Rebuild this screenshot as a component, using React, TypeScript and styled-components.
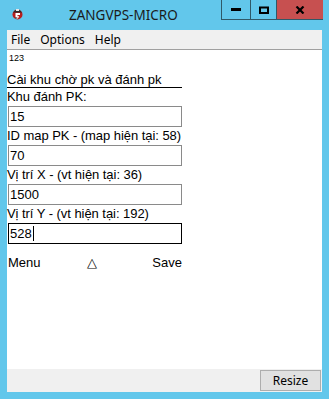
import React from "react";
import styled, { createGlobalStyle } from "styled-components";

const GlobalStyle = createGlobalStyle`
  html, body {
    margin: 0;
    padding: 0;
    background: #ffffff;
  }
`;

const Frame = styled.div`
  width: 329px;
  height: 399px;
  box-sizing: border-box;
  background: #62c7eb;
  display: flex;
  flex-flow: column nowrap;
  padding: 0 7px 7px 7px;
  font-family: "Liberation Sans", Arial, sans-serif;
`;

const TitleBar = styled.div`
  height: 30px;
  flex: 0 0 30px;
  display: flex;
  align-items: flex-start;
  margin: 0 -7px;
`;

const AppIcon = styled.svg`
  margin: 8px 0 0 12px;
  flex: 0 0 auto;
`;

const TitleText = styled.div`
  margin: 6px 0 0 46px;
  font-family: "Noto Sans", "Segoe UI", sans-serif;
  font-size: 13.5px;
  line-height: 18px;
  color: #1b1b1b;
  flex: 1;
`;

const WindowButtons = styled.div`
  display: flex;
  margin-right: 6px;
  height: 20px;
  border-bottom: 1px solid #2f5968;
  border-left: 1px solid #2f5968;
  box-sizing: border-box;
`;

const WinButton = styled.div<{ $w: number; $close?: boolean }>`
  width: ${({ $w }) => $w}px;
  height: 19px;
  display: flex;
  align-items: center;
  justify-content: center;
  background: ${({ $close }) => ($close ? "#c75050" : "transparent")};
  border-right: ${({ $close }) => ($close ? "none" : "1px solid #2f5968")};
`;

const Client = styled.div`
  flex: 1;
  display: flex;
  flex-flow: column nowrap;
  background: #ffffff;
`;

const MenuBar = styled.div`
  height: 19px;
  background: #f0f0f0;
  border-bottom: 1px solid #a0a0a0;
  display: flex;
  align-items: center;
  padding-left: 4px;
  font-family: "Noto Sans", "Segoe UI", sans-serif;
  font-size: 12px;
  color: #000;
`;

const MenuItem = styled.span`
  padding: 0 5px 0 0;
  margin-right: 5px;
  line-height: 19px;
`;

const Content = styled.div`
  flex: 1;
  padding-top: 3px;
`;

const Tag = styled.div`
  font-size: 9px;
  line-height: 11px;
  padding-left: 2px;
  color: #000;
`;

const Form = styled.div`
  width: 175px;
  margin-top: 8px;
  display: flex;
  flex-flow: column nowrap;
`;

const Heading = styled.div`
  font-size: 13px;
  line-height: 15px;
  color: #000;
  border-bottom: 1px solid #000;
  white-space: nowrap;
`;

const Label = styled.div`
  font-size: 13px;
  line-height: 14px;
  padding-top: 2px;
  height: 16px;
  color: #000;
  white-space: nowrap;
  letter-spacing: -0.05px;
`;

const Field = styled.div<{ $focused?: boolean }>`
  margin-left: 1px;
  height: 21px;
  box-sizing: border-box;
  border: 1px solid ${({ $focused }) => ($focused ? "#000" : "#8a8a8a")};
  font-size: 13px;
  line-height: 19px;
  padding-left: 1px;
  color: #000;
  display: flex;
  align-items: center;
`;

const Caret = styled.span`
  display: inline-block;
  width: 1px;
  height: 15px;
  background: #000;
  margin-left: 1px;
`;

const ActionRow = styled.div`
  margin-top: 11px;
  display: grid;
  grid-template-columns: 1fr auto 1fr;
  align-items: center;
  font-size: 13px;
  line-height: 15px;
  color: #000;
  padding-left: 1px;
`;

const ActionMiddle = styled.span`
  margin-right: 7px;
`;

const ActionRight = styled.span`
  text-align: right;
`;

const StatusBar = styled.div`
  height: 23px;
  background: #f0f0f0;
  display: flex;
  justify-content: flex-end;
  align-items: flex-start;
  padding-top: 1px;
  box-sizing: border-box;
`;

const ResizeButton = styled.div`
  width: 61px;
  height: 21px;
  box-sizing: border-box;
  margin-right: 1px;
  border: 1px solid #adadad;
  background: #e1e1e1;
  font-family: "Noto Sans", "Segoe UI", sans-serif;
  font-size: 12px;
  line-height: 19px;
  text-align: center;
  color: #000;
`;

const fields = [
  { label: "Khu đánh PK:", value: "15" },
  { label: "ID map PK - (map hiện tại: 58)", value: "70" },
  { label: "Vị trí X - (vt hiện tại: 36)", value: "1500" },
  { label: "Vị trí Y - (vt hiện tại: 192)", value: "528", focused: true },
];

export default function App() {
  return (
    <>
      <GlobalStyle />
      <Frame>
        <TitleBar>
          <AppIcon width="11" height="12" viewBox="0 0 11 12">
            <circle cx="5.5" cy="6.5" r="5" fill="#b81e1e" />
            <path d="M1 4.5 A5 5 0 0 1 10 4.5 Z" fill="#2b2b2b" />
            <rect x="4" y="1" width="3" height="2" fill="#e8e8e8" />
            <path d="M3.5 5 H8 V7 H5.5 V8.2 H7 V9.4 H5.5 V11 H3.5 Z" fill="#ffffff" />
            <rect x="3.5" y="9" width="1" height="2" fill="#111" />
          </AppIcon>
          <TitleText>ZANGVPS-MICRO</TitleText>
          <WindowButtons>
            <WinButton $w={28}>
              <svg width="10" height="3" viewBox="0 0 10 3">
                <rect x="0" y="0" width="10" height="3" fill="#000" />
              </svg>
            </WinButton>
            <WinButton $w={25}>
              <svg width="10" height="8" viewBox="0 0 10 8">
                <rect x="1" y="1.5" width="8" height="5.5" fill="none" stroke="#000" strokeWidth="2" />
              </svg>
            </WinButton>
            <WinButton $w={46} $close>
              <svg width="10" height="8" viewBox="0 0 10 8">
                <path d="M1.5 0.5 L8.5 7.5 M8.5 0.5 L1.5 7.5" stroke="#000" strokeWidth="2.2" />
              </svg>
            </WinButton>
          </WindowButtons>
        </TitleBar>
        <Client>
          <MenuBar>
            <MenuItem>File</MenuItem>
            <MenuItem>Options</MenuItem>
            <MenuItem>Help</MenuItem>
          </MenuBar>
          <Content>
            <Tag>123</Tag>
            <Form>
              <Heading>Cài khu chờ pk và đánh pk</Heading>
              {fields.map((f) => (
                <React.Fragment key={f.label}>
                  <Label>{f.label}</Label>
                  <Field $focused={f.focused}>
                    {f.value}
                    {f.focused && <Caret />}
                  </Field>
                </React.Fragment>
              ))}
              <ActionRow>
                <span>Menu</span>
                <ActionMiddle>△</ActionMiddle>
                <ActionRight>Save</ActionRight>
              </ActionRow>
            </Form>
          </Content>
          <StatusBar>
            <ResizeButton>Resize</ResizeButton>
          </StatusBar>
        </Client>
      </Frame>
    </>
  );
}
